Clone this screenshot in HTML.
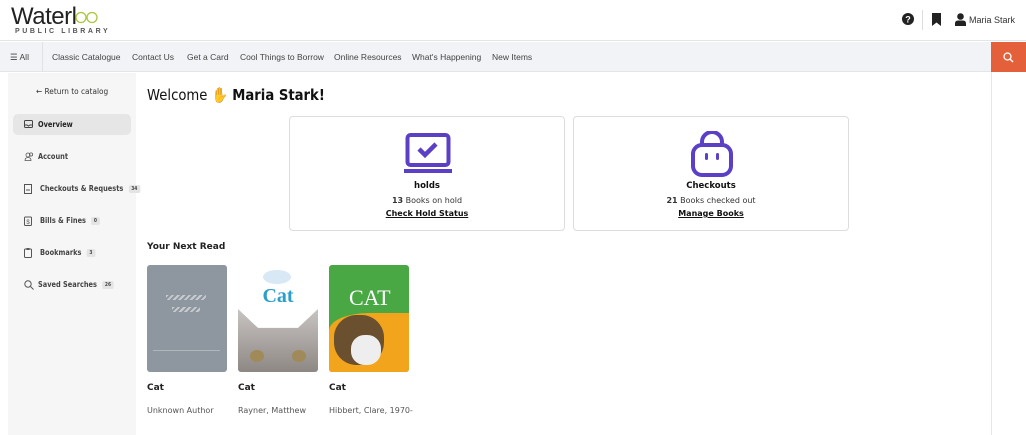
<!DOCTYPE html>
<html><head><meta charset="utf-8"><style>
*{box-sizing:border-box;margin:0;padding:0}
body{width:1026px;height:435px;overflow:hidden;background:#fff;font-family:"Liberation Sans",sans-serif;color:#222;position:relative}
.hdr{position:absolute;left:0;top:0;width:1026px;height:41px;border-bottom:1px solid #e3e5e8}
.logo{position:absolute;left:11px;top:5px;font-size:24px;color:#222;letter-spacing:-0.5px;line-height:24px}
.logo2{position:absolute;left:15px;top:28px;font-size:7px;letter-spacing:2.6px;color:#555;font-weight:bold}
.nav{position:absolute;left:0;top:42px;width:991px;height:30px;background:#f1f3f6;border-bottom:1px solid #e3e5e8;font-size:8.5px;color:#444}
.nav span{position:absolute;top:10px;white-space:nowrap}
.srch{position:absolute;left:991px;top:42px;width:35px;height:30px;background:#e4603a}
.rcol{position:absolute;left:991px;top:72px;width:1px;height:363px;background:#e6e6e6}
.side{position:absolute;left:8px;top:73px;width:128px;height:362px;background:#f6f6f6}
.si{position:absolute;left:30px;font-size:7.5px;color:#444;font-weight:bold;font-family:"DejaVu Sans",sans-serif;white-space:nowrap;transform:scaleX(.88);transform-origin:left}
.ic{position:absolute;left:16px}
.badge{display:inline-block;background:#e4e4e4;border-radius:2px;font-size:5px;padding:1px 3px;margin-left:6px;vertical-align:1px}
.card{position:absolute;top:116px;width:276px;height:115px;border:1px solid #ddd;border-radius:4px;text-align:center;font-family:"DejaVu Sans",sans-serif}
.card .t{position:absolute;top:64px;width:100%;font-size:8.5px;font-weight:bold;color:#111}
.card .s{position:absolute;top:79px;width:100%;font-size:8px;color:#333}
.card .l{position:absolute;top:92px;width:100%;font-size:8px;font-weight:bold;text-decoration:underline;color:#111}
.bk{position:absolute;top:265px;width:80px;height:107px;border-radius:3px;overflow:hidden}
.bt{position:absolute;top:383px;font-size:9px;font-weight:bold;font-family:"DejaVu Sans",sans-serif}
.ba{position:absolute;top:406px;font-size:8px;color:#555;font-family:"DejaVu Sans",sans-serif}
</style></head><body>
<div class="hdr">
<div class="logo">Waterl</div>
<svg style="position:absolute;left:75px;top:11px" width="23" height="13" viewBox="0 0 23 13"><circle cx="6" cy="6.5" r="5" stroke="#a8c83a" stroke-width="1.3" fill="none"/><circle cx="17" cy="6.5" r="5" stroke="#a8c83a" stroke-width="1.3" fill="none"/></svg>
<div class="logo2">PUBLIC LIBRARY</div>
<svg style="position:absolute;left:902px;top:13px" width="12" height="12" viewBox="0 0 12 12"><circle cx="6" cy="6" r="6" fill="#222"/><text x="6" y="9.5" font-size="9" font-weight="bold" fill="#fff" text-anchor="middle" font-family="Liberation Sans">?</text></svg>
<div style="position:absolute;left:922px;top:10px;width:1px;height:20px;background:#ddd"></div>
<svg style="position:absolute;left:932px;top:13px" width="9" height="13" viewBox="0 0 9 13"><path d="M0 0H9V13L4.5 9.5L0 13Z" fill="#222"/></svg>
<svg style="position:absolute;left:955px;top:13px" width="11" height="13" viewBox="0 0 11 13"><circle cx="5.5" cy="3.5" r="3.3" fill="#222"/><path d="M0 13V10.5Q0 7.5 3 7.5H8Q11 7.5 11 10.5V13Z" fill="#222"/></svg>
<div style="position:absolute;left:969px;top:15px;font-size:9px;color:#333">Maria Stark</div>
</div>
<div class="nav">
<span style="left:10px">☰ All</span>
<div style="position:absolute;left:42px;top:0;width:1px;height:30px;background:#e0e2e5"></div>
<span style="left:52px">Classic Catalogue</span><span style="left:132px">Contact Us</span><span style="left:187px">Get a Card</span><span style="left:240px">Cool Things to Borrow</span><span style="left:334px">Online Resources</span><span style="left:412px">What's Happening</span><span style="left:492px">New Items</span>
</div>
<div class="srch"><svg style="position:absolute;left:12px;top:10px" width="11" height="11" viewBox="0 0 11 11"><circle cx="4.5" cy="4.5" r="3.5" stroke="#fff" stroke-width="1.3" fill="none"/><path d="M7 7L10 10" stroke="#fff" stroke-width="1.4"/></svg></div>
<div class="rcol"></div>
<div class="side">
<div style="position:absolute;left:28px;top:14px;font-size:8px;color:#333;font-family:'DejaVu Sans',sans-serif;white-space:nowrap;transform:scaleX(.92);transform-origin:left">← Return to catalog</div>
<div style="position:absolute;left:5px;top:41px;width:118px;height:21px;background:#e6e6e6;border-radius:5px"></div>
<svg class="ic" style="top:47px" width="9" height="8" viewBox="0 0 9 8"><rect x=".5" y=".5" width="8" height="7" rx="1" stroke="#444" fill="none"/><path d="M.5 5H3L4.5 6L6 5H8.5" stroke="#444" fill="none"/></svg>
<div class="si" style="top:47px;color:#222">Overview</div>
<svg class="ic" style="top:79px" width="10" height="9" viewBox="0 0 10 9"><circle cx="4" cy="3" r="2" stroke="#555" fill="none" stroke-width=".8"/><path d="M1 8.5Q1 5.5 4 5.5Q7 5.5 7 8.5Z" stroke="#555" fill="none" stroke-width=".8"/><circle cx="7" cy="2.5" r="1.6" stroke="#555" fill="none" stroke-width=".8"/></svg>
<div class="si" style="top:79px">Account</div>
<svg class="ic" style="top:111px" width="8" height="10" viewBox="0 0 8 10"><rect x=".5" y=".5" width="7" height="9" stroke="#555" fill="none"/><path d="M2 6H6" stroke="#555"/></svg>
<div class="si" style="top:111px;left:32px">Checkouts &amp; Requests<span class="badge">34</span></div>
<svg class="ic" style="top:143px" width="8" height="10" viewBox="0 0 8 10"><rect x=".5" y="1" width="7" height="8.5" rx="1" stroke="#555" fill="none"/><text x="4" y="8" font-size="6" text-anchor="middle" fill="#555">$</text></svg>
<div class="si" style="top:143px;left:32px">Bills &amp; Fines<span class="badge">0</span></div>
<svg class="ic" style="top:175px" width="8" height="10" viewBox="0 0 8 10"><rect x=".5" y="1" width="7" height="8.5" rx="1" stroke="#555" fill="none"/><rect x="2.5" y="0" width="3" height="2" fill="#555"/></svg>
<div class="si" style="top:175px;left:32px">Bookmarks<span class="badge">3</span></div>
<svg class="ic" style="top:207px" width="10" height="10" viewBox="0 0 10 10"><circle cx="4" cy="4" r="3.2" stroke="#555" fill="none"/><path d="M6.5 6.5L9.5 9.5" stroke="#555"/></svg>
<div class="si" style="top:207px">Saved Searches<span class="badge">26</span></div>
</div>
<div style="position:absolute;left:147px;top:86px;font-size:15px;color:#111;font-family:'DejaVu Sans',sans-serif;white-space:nowrap;transform:scaleX(.88);transform-origin:left">Welcome <span style="color:#f0b840">✋</span> <b>Maria Stark!</b></div>
<div class="card" style="left:289px">
<svg style="position:absolute;left:114px;top:15px" width="48" height="42" viewBox="0 0 48 42"><rect x="3.5" y="3" width="41" height="30" rx="3" stroke="#5b3fc4" stroke-width="4" fill="none"/><rect x="0" y="37" width="48" height="4" fill="#5b3fc4"/><path d="M15 17L21 23L32 12" stroke="#5b3fc4" stroke-width="4.5" fill="none"/></svg>
<div class="t">holds</div><div class="s"><b>13</b> Books on hold</div><div class="l">Check Hold Status</div></div>
<div class="card" style="left:573px">
<svg style="position:absolute;left:116px;top:14px" width="44" height="46" viewBox="0 0 44 46"><path d="M12 16V11A10 10 0 0 1 32 11V16" stroke="#5b3fc4" stroke-width="4" fill="none"/><rect x="3" y="14" width="38" height="30" rx="9" stroke="#5b3fc4" stroke-width="4" fill="none"/><rect x="15" y="22" width="3" height="7" rx="1.5" fill="#5b3fc4"/><rect x="26" y="22" width="3" height="7" rx="1.5" fill="#5b3fc4"/></svg>
<div class="t">Checkouts</div><div class="s"><b>21</b> Books checked out</div><div class="l">Manage Books</div></div>
<div style="position:absolute;left:147px;top:242px;font-size:9px;font-weight:bold;font-family:'DejaVu Sans',sans-serif">Your Next Read</div>
<div class="bk" style="left:147px;background:#8e979f">
<div style="position:absolute;left:19px;top:30px;width:40px;height:5px;background:repeating-linear-gradient(135deg,#c8ccd0 0 2px,#8e979f 2px 4px)"></div>
<div style="position:absolute;left:25px;top:42px;width:28px;height:5px;background:repeating-linear-gradient(135deg,#c8ccd0 0 2px,#8e979f 2px 4px)"></div>
<div style="position:absolute;left:6px;top:85px;width:67px;height:1px;background:#b0b6bb"></div></div>
<div class="bk" style="left:238px;background:#fff">
<div style="position:absolute;left:25px;top:5px;width:28px;height:14px;border-radius:50%;background:#d8e8f5"></div>
<div style="position:absolute;left:0;top:20px;width:80px;text-align:center;font-family:'Liberation Serif',serif;font-weight:bold;font-size:20px;color:#2a9fc9">Cat</div>
<div style="position:absolute;left:0;top:44px;width:80px;height:63px;background:linear-gradient(#c8c4c2,#8e8884);clip-path:polygon(0 0,25% 30%,75% 30%,100% 0,100% 100%,0 100%)"></div>
<div style="position:absolute;left:12px;top:85px;width:14px;height:12px;border-radius:50%;background:#a08a5a"></div>
<div style="position:absolute;left:54px;top:85px;width:14px;height:12px;border-radius:50%;background:#a08a5a"></div></div>
<div class="bk" style="left:329px;background:#49a844">
<div style="position:absolute;left:0;top:48px;width:80px;height:59px;background:#f2a51c;border-radius:50% 0 0 0/30% 0 0 0"></div>
<div style="position:absolute;left:20px;top:20px;font-family:'Liberation Serif',serif;font-size:22px;color:#fff">CAT</div>
<div style="position:absolute;left:5px;top:50px;width:50px;height:50px;border-radius:45%;background:#6b5030"></div>
<div style="position:absolute;left:22px;top:70px;width:30px;height:30px;border-radius:45%;background:#eee"></div></div>
<div class="bt" style="left:147px">Cat</div><div class="bt" style="left:238px">Cat</div><div class="bt" style="left:329px">Cat</div>
<div class="ba" style="left:147px">Unknown Author</div><div class="ba" style="left:238px">Rayner, Matthew</div><div class="ba" style="left:329px">Hibbert, Clare, 1970-</div>
</body></html>
